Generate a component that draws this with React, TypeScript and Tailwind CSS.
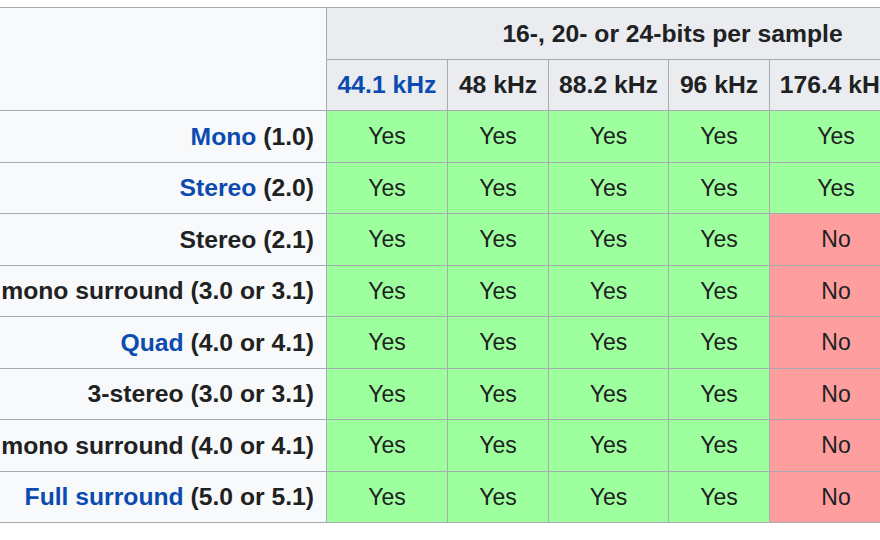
import React from "react";

type Row = {
  link?: string;
  rest: string;
  values: string[];
};

const rows: Row[] = [
  { link: "Mono", rest: " (1.0)", values: ["Yes", "Yes", "Yes", "Yes", "Yes", "Yes"] },
  { link: "Stereo", rest: " (2.0)", values: ["Yes", "Yes", "Yes", "Yes", "Yes", "Yes"] },
  { rest: "Stereo (2.1)", values: ["Yes", "Yes", "Yes", "Yes", "No", "No"] },
  { rest: "Stereo + mono surround (3.0 or 3.1)", values: ["Yes", "Yes", "Yes", "Yes", "No", "No"] },
  { link: "Quad", rest: " (4.0 or 4.1)", values: ["Yes", "Yes", "Yes", "Yes", "No", "No"] },
  { rest: "3-stereo (3.0 or 3.1)", values: ["Yes", "Yes", "Yes", "Yes", "No", "No"] },
  { rest: "3-stereo + mono surround (4.0 or 4.1)", values: ["Yes", "Yes", "Yes", "Yes", "No", "No"] },
  { link: "Full surround", rest: " (5.0 or 5.1)", values: ["Yes", "Yes", "Yes", "Yes", "No", "No"] },
];

const rates = ["44.1 kHz", "48 kHz", "88.2 kHz", "96 kHz", "176.4 kHz", "192 kHz"];
const widths = ["w-[121px]", "w-[101px]", "w-[120px]", "w-[101px]", "w-[133px]", "w-[116px]"];

export default function App() {
  return (
    <div
      className="w-[880px] h-[540px] overflow-hidden bg-white pt-[7px] text-[#202122]"
      style={{ fontFamily: '"Liberation Sans", Arial, sans-serif' }}
    >
      <table className="table-fixed border-collapse ml-[-154px] w-[1172px]">
        <colgroup>
          <col className="w-[480px]" />
          {widths.map((w, i) => (
            <col key={i} className={w} />
          ))}
        </colgroup>
        <thead>
          <tr className="h-[52px]">
            <th rowSpan={2} className="border border-[#a7acb3] bg-[#f8f9fa]"></th>
            <th
              colSpan={6}
              className="border border-[#a7acb3] bg-[#eaecf0] text-[24.7px] font-bold text-center"
            >
              16-, 20- or 24-bits per sample
            </th>
          </tr>
          <tr className="h-[51px]">
            {rates.map((r, i) => (
              <th
                key={r}
                className={
                  "border border-[#a7acb3] bg-[#eaecf0] text-[24.7px] font-bold text-center whitespace-nowrap " +
                  (i === 0 ? "text-[#0b4bb0]" : "")
                }
              >
                {r}
              </th>
            ))}
          </tr>
        </thead>
        <tbody>
          {rows.map((row, ri) => (
            <tr key={ri} className="h-[51.5px]">
              <th className="border border-[#a7acb3] bg-[#f8f9fa] text-right pr-3 text-[24.7px] font-bold whitespace-nowrap">
                {row.link && <span className="text-[#0b4bb0]">{row.link}</span>}
                {row.rest}
              </th>
              {row.values.map((v, vi) => (
                <td
                  key={vi}
                  className={
                    "border border-[#a7acb3] text-center text-[23px] " +
                    (v === "Yes" ? "bg-[#9eff9e]" : "bg-[#ff9e9e]")
                  }
                >
                  {v}
                </td>
              ))}
            </tr>
          ))}
        </tbody>
      </table>
    </div>
  );
}
